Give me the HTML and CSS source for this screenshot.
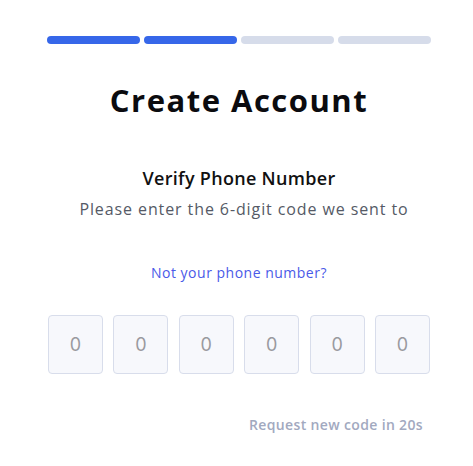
FILE: index.html
```html
<!DOCTYPE html>
<html lang="en">
<head>
<meta charset="utf-8">
<title>Create Account</title>
<link rel="stylesheet" href="styles.css">
</head>
<body>
<main class="card">
  <div class="steps">
    <span class="step active"></span>
    <span class="step active"></span>
    <span class="step"></span>
    <span class="step"></span>
  </div>
  <h1 class="title">Create Account</h1>
  <h2 class="subtitle">Verify Phone Number</h2>
  <p class="hint">Please enter the 6-digit code we sent to</p>
  <p class="phone"></p>
  <a class="change" href="#">Not your phone number?</a>
  <div class="otp">
    <input class="digit" type="text" placeholder="0" maxlength="1">
    <input class="digit" type="text" placeholder="0" maxlength="1">
    <input class="digit" type="text" placeholder="0" maxlength="1">
    <input class="digit" type="text" placeholder="0" maxlength="1">
    <input class="digit" type="text" placeholder="0" maxlength="1">
    <input class="digit" type="text" placeholder="0" maxlength="1">
  </div>
  <div class="resend">Request new code in 20s</div>
</main>
</body>
</html>
```
FILE: styles.css
```css
* { box-sizing: border-box; }
html, body { margin: 0; background: #ffffff; }
body {
  font-family: "Open Sans", "DejaVu Sans", sans-serif;
  color: #111111;
}
.card {
  width: 384px;
  margin-left: 47px;
  padding-top: 36px;
  display: flex;
  flex-direction: column;
  align-items: center;
}
.steps {
  width: 100%;
  display: flex;
  gap: 4px;
}
.step {
  flex: 1;
  height: 8px;
  border-radius: 4px;
  background: #d6dcea;
}
.step.active { background: #3667e9; }
.title {
  margin: 36px 0 0;
  font-size: 31px;
  line-height: 40px;
  font-weight: 700;
  letter-spacing: 1.5px;
  color: #0b0b0f;
}
.subtitle {
  margin: 46px 0 0;
  font-size: 18px;
  line-height: 24px;
  font-weight: 600;
  letter-spacing: 0.3px;
  color: #111111;
}
.hint {
  margin: 8px 0 0 10px;
  font-size: 16px;
  line-height: 22px;
  letter-spacing: 0.9px;
  color: #555a66;
}
.phone {
  margin: 0;
  height: 28px;
}
.change {
  margin-top: 15px;
  font-size: 14px;
  line-height: 20px;
  font-weight: 500;
  letter-spacing: 0.5px;
  color: #4a5ae8;
  text-decoration: none;
}
.otp {
  margin-top: 32px;
  width: 384px;
  display: grid;
  grid-template-columns: repeat(6, 55px);
  gap: 10.4px;
  padding-left: 1px;
}
.digit {
  width: 100%;
  height: 59px;
  border: 1px solid #d8ddeb;
  border-radius: 4px;
  background: #f7f8fc;
  text-align: center;
  font-family: "Inter", sans-serif;
  font-size: 18px;
  color: #333;
  outline: none;
}
.digit::placeholder { color: #9a9a9f; }
.resend {
  align-self: flex-end;
  margin: 41px 8px 0 0;
  font-size: 14px;
  line-height: 20px;
  font-weight: 600;
  letter-spacing: 0.35px;
  color: #a2a9bf;
}
```
